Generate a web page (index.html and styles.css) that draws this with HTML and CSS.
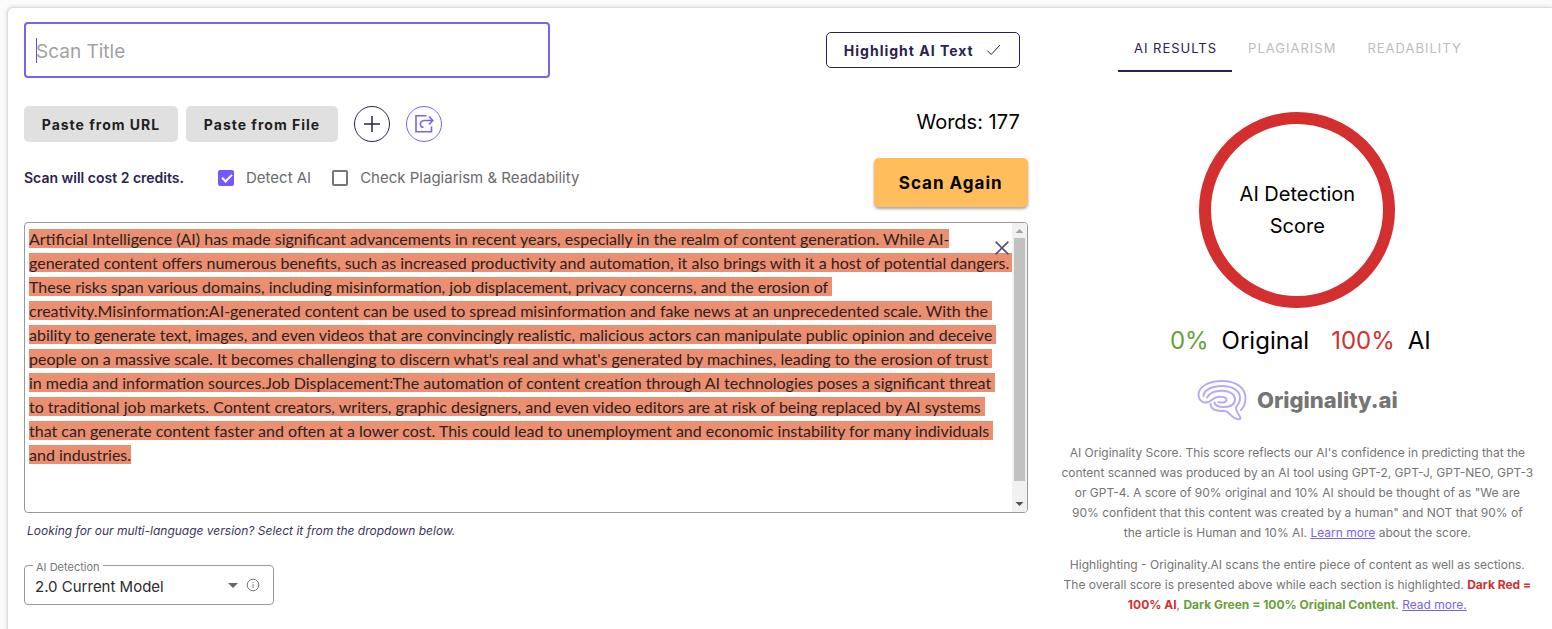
FILE: index.html
```html
<!DOCTYPE html>
<html lang="en">
<head>
<meta charset="utf-8">
<title>AI Content Scan</title>
<link rel="stylesheet" href="styles.css">
</head>
<body>
<main class="card">
  <section class="scan">
    <div class="row row-title">
      <div class="title-field">
        <input class="title-input" type="text" placeholder="Scan Title" aria-label="Scan Title">
        <span class="caret"></span>
      </div>
      <button class="btn btn-outline" type="button">Highlight AI Text
        <svg width="16" height="16" viewBox="0 0 16 16" fill="none" stroke="currentColor"><path d="M1.5 8.8 5.2 12.5 14 3"/></svg>
      </button>
    </div>

    <div class="row row-actions">
      <div class="actions">
        <button class="btn btn-grey" type="button">Paste from URL</button>
        <button class="btn btn-grey btn-file" type="button">Paste from File</button>
        <button class="btn-round" type="button" aria-label="New scan">
          <svg width="18" height="18" viewBox="0 0 18 18" fill="none" stroke="currentColor" stroke-width="1.5"><path d="M9 1v16M1 9h16"/></svg>
        </button>
        <button class="btn-round btn-share" type="button" aria-label="Share">
          <svg width="20" height="20" viewBox="0 0 20 20" fill="none" stroke="currentColor" stroke-width="1.6"><path d="M12.500 1.800H2v16h15.500V12.500"/><path d="M9.500 13.300C5.500 13.500 5 7 10 6.500h8.500M15 2.500l3.800 4L15 10.500"/></svg>
        </button>
      </div>
      <p class="words">Words: 177</p>
    </div>

    <div class="row row-options">
      <div class="options">
        <strong class="cost">Scan will cost 2 credits.</strong>
        <label class="check"><input type="checkbox" checked>Detect AI</label>
        <label class="check"><input type="checkbox">Check Plagiarism &amp; Readability</label>
      </div>
      <button class="btn btn-scan" type="button">Scan Again</button>
    </div>

    <div class="editor">
      <div class="editor-text"><mark>Artificial Intelligence (AI) has made significant advancements in recent years, especially in the realm of content generation. While AI-
generated content offers numerous benefits, such as increased productivity and automation, it also brings with it a host of potential dangers. 
These risks span various domains, including misinformation, job displacement, privacy concerns, and the erosion of 
creativity.Misinformation:AI-generated content can be used to spread misinformation and fake news at an unprecedented scale. With the 
ability to generate text, images, and even videos that are convincingly realistic, malicious actors can manipulate public opinion and deceive 
people on a massive scale. It becomes challenging to discern what's real and what's generated by machines, leading to the erosion of trust 
in media and information sources.Job Displacement:The automation of content creation through AI technologies poses a significant threat 
to traditional job markets. Content creators, writers, graphic designers, and even video editors are at risk of being replaced by AI systems 
that can generate content faster and often at a lower cost. This could lead to unemployment and economic instability for many individuals 
and industries.</mark></div>
      <div class="scrollbar">
        <svg width="9" height="6" viewBox="0 0 9 6" fill="#a3a3a3"><path d="M0.500 5h8L4.500 1z"/></svg>
        <span class="thumb"></span>
        <svg width="9" height="6" viewBox="0 0 9 6" fill="#505050"><path d="M0.500 1h8L4.500 5z"/></svg>
      </div>
      <button class="clear" type="button" aria-label="Clear text">
        <svg width="14" height="14" viewBox="0 0 14 14" fill="none" stroke="currentColor" stroke-width="1.600"><path d="M.6.6l12.800 12.800M13.400.6.6 13.400"/></svg>
      </button>
    </div>

    <p class="note">Looking for our multi-language version? Select it from the dropdown below.</p>

    <div class="model">
      <label class="model-label" for="model">AI Detection</label>
      <select class="model-select" id="model"><option>2.0 Current Model</option></select>
      <svg width="10" height="5" viewBox="0 0 10 5" fill="#666"><path d="M0 0h10L5 5z"/></svg>
      <svg width="14" height="14" viewBox="0 0 14 14" fill="none" stroke="#777"><circle cx="7" cy="7" r="5.800"/><path d="M7 6.200v3.800M7 4v1.200"/></svg>
    </div>
  </section>

  <aside class="results">
    <div class="tabs" role="tablist">
      <button class="tab tab-active" type="button" role="tab" aria-selected="true">AI RESULTS</button>
      <button class="tab" type="button" role="tab">PLAGIARISM</button>
      <button class="tab" type="button" role="tab">READABILITY</button>
    </div>
    <div class="ring">AI Detection<br>Score</div>
    <div class="scores">
      <span class="score"><span class="green">0%</span>Original</span>
      <span class="score"><span class="red">100%</span>AI</span>
    </div>
    <div class="brand">
      <svg width="50" height="42" viewBox="0 0 50 42" fill="none" stroke="#b9aaf5" stroke-width="2" stroke-linecap="round" stroke-linejoin="round">
        <path d="M44 31c3-3 4.500-7 4.500-12C48.500 8 38 2 25 2 11 2 1.500 8 1.500 16c0 5 4 8 8 7.500 5-.5 6-4.500 11-5.500 5-.8 9 .2 9 2.700 0 3-4 3.300-8 2.600"/>
        <path d="M6.500 17C6.500 11 15 7 25 7c11 0 18 5 18 12 0 4-2 7-4 9-1.500 2 4 9 4.500 11 .3 2-4 1.500-7-.5-3.500-2.500-5-6.500-9.500-6.500-8 0-13-1-13.500-7"/>
        <path d="M10 18.500c3-5 9-7 16-6.700 7.500.4 12 4 12 8.200 0 5-4 8-11 8-5 0-9-1-9.500-4.500"/>
      </svg>
      <span class="brand-name">Originality.ai</span>
    </div>
    <p class="info">AI Originality Score. This score reflects our AI's confidence in predicting that the<br>content scanned was produced by an AI tool using GPT-2, GPT-J, GPT-NEO, GPT-3<br>or GPT-4. A score of 90% original and 10% AI should be thought of as "We are<br>90% confident that this content was created by a human" and NOT that 90% of<br>the article is Human and 10% AI. <a href="#">Learn more</a> about the score.</p>
    <p class="info">Highlighting - Originality.AI scans the entire piece of content as well as sections.<br>The overall score is presented above while each section is highlighted. <b class="red">Dark Red =<br>100% AI</b>, <b class="green">Dark Green = 100% Original Content</b>. <a href="#">Read more.</a></p>
  </aside>
</main>
</body>
</html>
```
FILE: styles.css
```css
* { box-sizing: border-box; }

body {
  margin: 0;
  padding: 7px 0 0 7px;
  background: #fbfbfb;
  font-family: Inter, "Liberation Sans", sans-serif;
  font-size: 15px;
  color: #000;
  overflow: hidden;
}

p { margin: 0; }
button, input, select { font: inherit; }
button { padding: 0; cursor: pointer; }
svg { display: block; flex: none; }

.card {
  display: grid;
  grid-template-columns: minmax(0, 27fr) minmax(0, 13fr);
  gap: 28px;
  min-height: calc(100vh + 8px);
  padding: 14px 13px 0 16px;
  background: #fff;
  border: 1px solid #ddd;
  border-right: 0;
  border-radius: 6px 0 0 0;
  box-shadow: 0 0 4px rgba(0, 0, 0, 0.15);
}

.scan { display: flex; flex-direction: column; }
.row { display: flex; align-items: center; justify-content: space-between; }
.row-title { padding-right: 8px; }
.title-field { position: relative; width: 52.8%; }
.title-input {
  display: block;
  width: 100%;
  height: 56px;
  padding: 2px 10px 0;
  border: 2px solid #7a63e8;
  border-radius: 4px;
  background: #fff;
  font-size: 19px;
  outline: 0;
}
.title-input::placeholder { color: #a2a2a2; }
.caret {
  position: absolute;
  top: 16px;
  left: 12px;
  width: 1px;
  height: 25px;
  background: #6650d8;
}

.btn {
  height: 36px;
  border: 0;
  border-radius: 5px;
  font-size: 14px;
  font-weight: 700;
  letter-spacing: 1px;
}
.btn-outline {
  display: flex;
  align-items: center;
  gap: 12px;
  padding: 0 17px;
  border: 1px solid #2a2250;
  background: #fff;
  color: #2a2250;
}
.row-actions { margin-top: 28px; padding-right: 8px; }
.actions { display: flex; gap: 8px; }
.btn-grey { width: 154px; background: #e0e0e0; color: #1f1f1f; }
.btn-file { width: 152px; margin-right: 8px; }
.btn-round {
  display: grid;
  place-items: center;
  width: 36px;
  height: 36px;
  border: 1px solid #2a2250;
  border-radius: 50%;
  background: #fff;
  color: #2a2250;
}
.btn-share { margin-left: 8px; border-color: #7a63e8; color: #7a63e8; }
.words { padding-bottom: 4px; font-size: 20px; }

.row-options { margin-top: 16px; }
.options { display: flex; align-items: center; margin-bottom: 10px; color: #6b6b6b; }
.cost { width: 194px; font-size: 14px; font-weight: 600; color: #2a2250; }
.check { display: flex; align-items: center; gap: 12px; margin-right: 21px; }
.check input {
  position: relative;
  appearance: none;
  width: 16px;
  height: 16px;
  margin: 0;
  border: 2px solid #757575;
  border-radius: 2px;
}
.check input:checked { border-color: #7657fa; background: #7657fa; }
.check input:checked::after {
  content: "";
  position: absolute;
  left: 4px;
  top: 0;
  width: 4px;
  height: 8px;
  border: solid #fff;
  border-width: 0 2px 2px 0;
  transform: rotate(45deg);
}
.btn-scan {
  width: 154px;
  height: 49px;
  background: #ffbd5c;
  color: #000;
  font-size: 17px;
  box-shadow: 0 2px 3px rgba(0, 0, 0, 0.35);
}

.editor {
  position: relative;
  display: flex;
  margin-top: 15px;
  height: 291px;
  border: 1px solid #999;
  border-radius: 4px;
  overflow: hidden;
}
.editor-text {
  flex: 1;
  min-width: 0;
  padding: 4px 0 0 4px;
  font-family: Lato, "Liberation Sans", sans-serif;
  font-size: 16px;
  line-height: 24px;
  white-space: pre;
}
.editor-text mark { background: #ea8f71; color: #2e211d; }
.scrollbar {
  display: flex;
  flex-direction: column;
  align-items: center;
  width: 15px;
  padding: 5px 0;
  background: #f1f1f1;
}
.thumb { width: 11px; height: 243px; margin: 4px 0 auto; background: #c1c1c1; }
.clear {
  position: absolute;
  top: 18px;
  right: 18px;
  border: 0;
  background: none;
  color: #51517a;
}

.note {
  margin-top: 8px;
  padding-left: 3px;
  font-size: 12px;
  font-style: italic;
  line-height: 20px;
  color: #3b3462;
}

.model {
  position: relative;
  display: flex;
  align-items: center;
  gap: 8px;
  width: 250px;
  height: 40px;
  margin-top: 24px;
  padding-right: 13px;
  border: 1px solid #999;
  border-radius: 4px;
}
.model-label {
  position: absolute;
  top: -6px;
  left: 8px;
  padding: 0 3px;
  background: #fff;
  font-size: 11px;
  line-height: 14px;
  color: #777;
}
.model-select {
  flex: 1;
  height: 36px;
  padding: 3px 0 0 10px;
  border: 0;
  background: none;
  appearance: none;
  color: #2c2c2c;
  outline: 0;
}

.results { display: flex; flex-direction: column; align-items: center; }
.tabs { display: flex; padding-top: 2px; }
.tab {
  height: 48px;
  padding: 2px 15px 0 16px;
  border: 0;
  border-bottom: 2px solid transparent;
  background: none;
  font-size: 13px;
  letter-spacing: 1px;
  color: #bdbdbd;
}
.tab-active { border-color: #2a2250; color: #2a2250; }
.ring {
  display: grid;
  place-content: center;
  width: 196px;
  height: 196px;
  margin-top: 40px;
  border: 12px solid #d32f2f;
  border-radius: 50%;
  font-size: 20px;
  line-height: 32px;
  text-align: center;
}
.scores { display: flex; gap: 22px; margin-top: 17px; padding-left: 6px; font-size: 24px; line-height: 32px; }
.score { display: flex; gap: 13px; }
.green { color: #689f38; }
.red { color: #d32f2f; }
.brand { display: flex; align-items: center; gap: 10px; margin: 22px 0; }
.brand-name { font-size: 22px; font-weight: 800; line-height: 42px; color: #757575; }
.info {
  margin-bottom: 12px;
  font-size: 12px;
  line-height: 20px;
  text-align: center;
  white-space: nowrap;
  color: #757575;
}
.info b { font-weight: 700; }
.info a { color: #7a63e8; }
```
